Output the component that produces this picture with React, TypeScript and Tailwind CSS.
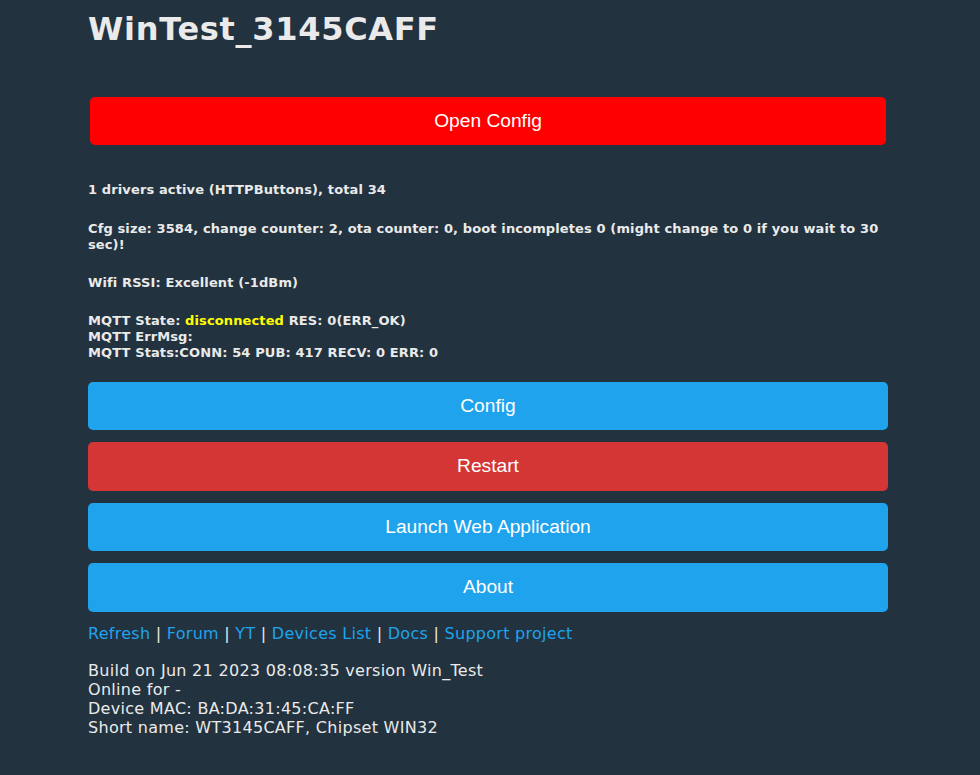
const links = ['Refresh', 'Forum', 'YT', 'Devices List', 'Docs', 'Support project'];

const buttons = [
  { label: 'Config', color: 'bg-[#1fa3ec]' },
  { label: 'Restart', color: 'bg-[#d43535]' },
  { label: 'Launch Web Application', color: 'bg-[#1fa3ec]' },
  { label: 'About', color: 'bg-[#1fa3ec]' },
];

export default function App() {
  return (
    <div className="min-h-screen bg-[#22323f] text-[#eaeaea] font-['DejaVu_Sans',Verdana,sans-serif] pl-[88px] pb-8">
      <div className="w-[800px]">
        <h2 className="pt-[13px] text-[32px] leading-[32px] font-bold tracking-[0.7px]">WinTest_3145CAFF</h2>

        <button className="mt-[52px] mx-[2px] w-[796px] h-12 rounded-[5px] bg-[#ff0000] text-white text-[19.2px] font-['Liberation_Sans',Arial,sans-serif]">
          Open Config
        </button>

        <div className="text-[13px] leading-4 font-bold tracking-[0.12px]">
          <div className="mt-[37px]">1 drivers active (HTTPButtons), total 34</div>
          <div className="mt-[23px]">
            Cfg size: 3584, change counter: 2, ota counter: 0, boot incompletes 0 (might change to 0 if you wait to 30 sec)!
          </div>
          <div className="mt-[22px]">Wifi RSSI: Excellent (-1dBm)</div>
          <div className="mt-[22px]">
            MQTT State: <span className="text-[#ffff00]">disconnected</span> RES: 0(ERR_OK)
            <br />
            MQTT ErrMsg:
            <br />
            MQTT Stats:CONN: 54 PUB: 417 RECV: 0 ERR: 0
          </div>
        </div>

        <div className="mt-[21px] flex flex-col gap-3">
          {buttons.map((b) => (
            <button
              key={b.label}
              className={`w-full h-[48.4px] rounded-[5px] ${b.color} text-white text-[19.2px] font-['Liberation_Sans',Arial,sans-serif]`}
            >
              {b.label}
            </button>
          ))}
        </div>

        <div className="mt-3 text-base leading-[19px] tracking-[0.28px]">
          {links.map((l, i) => (
            <span key={l}>
              <a href="#" className="text-[#1fa3ec]">{l}</a>
              {i < links.length - 1 && ' | '}
            </span>
          ))}
        </div>

        <div className="mt-[18px] text-base leading-[19px] tracking-[0.29px]">
          Build on Jun 21 2023 08:08:35 version Win_Test
          <br />
          Online for -
          <br />
          Device MAC: BA:DA:31:45:CA:FF
          <br />
          Short name: WT3145CAFF, Chipset WIN32
        </div>
      </div>
    </div>
  );
}
